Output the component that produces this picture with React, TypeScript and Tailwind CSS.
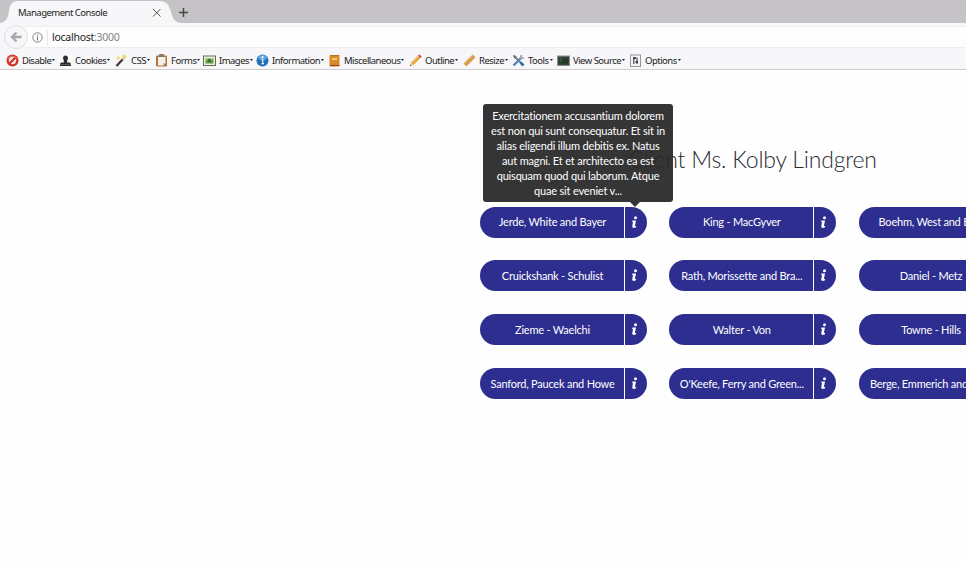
import type { ReactNode } from "react";

const tools: { label: string; cell: string; icon: ReactNode }[] = [
  {
    label: "Disable", cell: "w-[53px]",
    icon: (<><circle cx="6.5" cy="6.5" r="6" fill="#cf3426" /><circle cx="6.5" cy="6.5" r="3.7" fill="#f6e2de" /><path d="M3.5 9.5l6-6" stroke="#cf3426" strokeWidth="2.2" /><path d="M2 4.5Q6.500-.5 11 4.500" stroke="#ef8a78" strokeWidth=".8" fill="none" /></>),
  },
  {
    label: "Cookies", cell: "w-[56px]",
    icon: (<><path d="M4 3.500a2.600 2.800 0 0 1 5 0c0 1.800-1 2.500-1 5h2.500q1.500.2 1.500 3.500H1Q1 8.700 2.500 8.500H5C5 6 4 5.300 4 3.500z" fill="#292b31" /><path d="M1 10.500h11" stroke="#6a6d73" strokeWidth=".7" /></>),
  },
  {
    label: "CSS", cell: "w-[40px]",
    icon: (<><path d="M1.500 12L8.500 4.500" stroke="#34302a" strokeWidth="2" /><path d="M7.500 5.500l2.500-2.500" stroke="#ddd3a0" strokeWidth="2" /><path d="M3 1l1 2 2 .5-2 1-1 2-1-2-1-.7 1.700-.7zM10 0l.6 1.500L12 2l-1.300 1 .3 2-1.500-1-2 .5.500-2L7 1.500l2-.2z" fill="#efd24d" opacity=".85" /></>),
  },
  {
    label: "Forms", cell: "w-[48px]",
    icon: (<><rect x="1" y="1.500" width="11" height="11" rx="1" fill="#b5713a" /><path d="M3 3h7.500v6L8 11.500H3z" fill="#f2f0ed" /><path d="M8 11.500V9h2.500z" fill="#c9c2ba" /><rect x="4" y="0" width="5" height="3" rx="1" fill="#8b7660" /></>),
  },
  {
    label: "Images", cell: "w-[53px]",
    icon: (<><rect x=".5" y="2" width="12" height="9.500" fill="#eef1e6" stroke="#5e7050" /><rect x="2.500" y="4" width="8" height="5.500" fill="#5e9a42" /><path d="M2.500 7l2-1.500L7 7l3.500-1.500v-1.500h-8z" fill="#a9ca78" /><rect x="5" y="5" width="3" height="3" fill="#416f39" /></>),
  },
  {
    label: "Information", cell: "w-[72px]",
    icon: (<><circle cx="6.500" cy="6.500" r="6" fill="#1f72b8" /><ellipse cx="6.500" cy="3.500" rx="4.500" ry="2.500" fill="#5ca6dd" /><circle cx="6.500" cy="3.200" r="1.100" fill="#fff" /><path d="M5.500 5.700h1.300v4M5.300 9.700h2.700" stroke="#fff" strokeWidth="1.100" fill="none" /></>),
  },
  {
    label: "Miscellaneous", cell: "w-[81px]",
    icon: (<><rect x="1.500" y="1" width="10" height="11.500" rx="1" fill="#d98a26" /><path d="M2 11.500h9.500" stroke="#844b17" /><path d="M4 4h5v2H4z" fill="#f6c476" /><path d="M2 1.500h9" stroke="#b56c21" strokeWidth=".8" /></>),
  },
  {
    label: "Outline", cell: "w-[54px]",
    icon: (<><path d="M1 12l1-3.500L10 .8 12.300 3 4.500 11z" fill="#e3a13c" /><path d="M9 1.700L10.400.4l2.300 2.200-1.400 1.500z" fill="#d34b48" /><path d="M1 12l1-3.500L4.500 11z" fill="#ead7b6" /><path d="M1 12l.5-1.500 1 1z" fill="#222" /><path d="M3 9l7-7" stroke="#f9d27f" strokeWidth=".8" /></>),
  },
  {
    label: "Resize", cell: "w-[49px]",
    icon: (<><path d="M.5 9.500L9.700.5 12.500 3.200 3.500 12.500z" fill="#dca04d" /><path d="M3 9l1 1M5 7l1 1M7 5l1 1M9 3l1 1" stroke="#c08640" strokeWidth=".7" /><path d="M.8 9.500l9-8.600" stroke="#f4ca85" strokeWidth=".8" /></>),
  },
  {
    label: "Tools", cell: "w-[45px]",
    icon: (<><path d="M2 2l8.500 8.500" stroke="#777e86" strokeWidth="1.800" /><path d="M9.500 1L8.500 3.500l1 1L12 3.800" fill="none" stroke="#929ca6" strokeWidth="1.500" /><path d="M8.500 4.500L1.500 11.500" stroke="#4f80bd" strokeWidth="2.300" /><path d="M8.500 8.500l3 3" stroke="#2f69b1" strokeWidth="2.500" /><path d="M1 1l3 1 .5 2-2 .5z" fill="#616971" /></>),
  },
  {
    label: "View Source", cell: "w-[72px]",
    icon: (<><rect x=".5" y="2" width="12" height="9.500" fill="#46504b" stroke="#888e89" /><rect x="1.500" y="3.500" width="10" height="7" fill="#263b2c" /><path d="M2.500 5h3M2.500 7h2" stroke="#5d7b5f" strokeWidth=".8" /></>),
  },
  {
    label: "Options", cell: "w-[55px]",
    icon: (<><rect x="1.500" y="1" width="10" height="11.500" fill="#f5f5f6" stroke="#93969c" /><path d="M4.800 3.500v6.500M8 3.500v6.500" stroke="#535962" strokeWidth="1.300" /><path d="M4 4h3M6.500 8h2.500" stroke="#22262d" strokeWidth="1.600" /></>),
  },
];

const clients = [
  "Jerde, White and Bayer", "King - MacGyver", "Boehm, West and Batz",
  "Cruickshank - Schulist", "Rath, Morissette and Bra...", "Daniel - Metz",
  "Zieme - Waelchi", "Walter - Von", "Towne - Hills",
  "Sanford, Paucek and Howe", "O'Keefe, Ferry and Green...", "Berge, Emmerich and Koss",
];

function BrowserChrome() {
  return (
    <header className="bg-[#f7f6f8] font-['Noto_Sans','Open_Sans',sans-serif] text-[#222]">
      <div className="relative flex h-[23px] bg-[#c5c3c6]">
        <svg className="absolute left-0 top-0" width="182" height="23" viewBox="0 0 182 23">
          <path d="M0 23C7 22 8 17 9 11C10 4 12 1 18 1H159C168 1 169 6 171 12C173 19 175 23 182 23z" fill="#f7f6f8" />
        </svg>
        <div className="relative flex h-full w-[174px] items-center pl-[18px] pt-[1px]">
          <span className="w-[133px] whitespace-nowrap text-[9.5px] leading-[13px] tracking-[-0.5px]">Management Console</span>
          <svg width="11" height="11" viewBox="0 0 11 11" stroke="#555" fill="none"><path d="M2 2l7.500 7.500M9.500 2L2 9.500" /></svg>
        </div>
        <svg className="relative mt-[7px] ml-[4px]" width="11" height="11" viewBox="0 0 11 11"><path d="M5.500 1v9M1 5.500h9" stroke="#444" strokeWidth="1.500" /></svg>
      </div>
      <div className="flex h-[28px] items-center pl-[4px]">
        <div className="z-10 flex size-[24px] shrink-0 items-center justify-center rounded-full border border-[#dfdde0] bg-[#f7f6f8]">
          <svg width="12" height="12" viewBox="0 0 12 12" fill="none" stroke="#a9a7ab" strokeWidth="2.300"><path d="M11.500 6H2M6.500 1.500L2 6l4.500 4.500" /></svg>
        </div>
        <div className="-ml-[3px] flex h-[22px] flex-1 items-center border-y border-[#eeecef] bg-[#fdfdfe] pl-[7px]">
          <svg width="11" height="11" viewBox="0 0 11 11" fill="none" stroke="#77757a"><circle cx="5.500" cy="5.500" r="4.700" strokeWidth=".9" /><path d="M5.500 2.500v1.200M5.500 4.600v3.800" strokeWidth="1.100" /></svg>
          <span className="ml-[4px] h-[15px] w-px bg-[#e8e6e9]" />
          <span className="ml-[4px] pt-[2px] text-[10.5px] tracking-[-0.26px]">localhost<span className="text-[#858387]">:3000</span></span>
        </div>
      </div>
      <nav className="flex h-[19px] items-center border-b border-[#cfcdd0] pl-[6px]">
        {tools.map((tool) => (
          <div key={tool.label} className={`flex shrink-0 items-center ${tool.cell}`}>
            <svg className="mr-[3px] shrink-0" width="13" height="13" viewBox="0 0 13 13">{tool.icon}</svg>
            <span className="whitespace-nowrap text-[9.5px] leading-[13px] tracking-[-0.52px]">{tool.label}</span>
            <svg className="ml-px shrink-0" width="3" height="2" viewBox="0 0 3 2"><path d="M0 0h3L1.500 2z" fill="#222" /></svg>
          </div>
        ))}
      </nav>
    </header>
  );
}

function ClientButton({ name, children }: { name: string; children?: ReactNode }) {
  return (
    <div className="relative flex h-[31px] w-[167px] text-[11px] text-white">
      <button className="flex h-full w-[144px] items-center justify-center rounded-l-full bg-[#2d2e8f] pl-px pt-px">
        <span className="whitespace-nowrap tracking-[-0.22px]">{name}</span>
      </button>
      <button className="ml-px flex h-full w-[22px] items-center rounded-r-full bg-[#2d2e8f] pl-[6px]" aria-label="Details">
        <svg width="7" height="13" viewBox="0 0 7 13" fill="white"><circle cx="4.500" cy="1.800" r="1.500" /><path d="M1.500 4.500H5L3.900 10H5.200L5 11.300Q1.500 12.700 1.200 10.800L2 6H1.100z" /></svg>
      </button>
      {children}
    </div>
  );
}

export default function App() {
  return (
    <div className="h-[564px] w-[966px] overflow-hidden bg-[#fefefe]">
      <BrowserChrome />
      <main className="ml-[480px] w-[545px] pt-[70px] font-['Lato',sans-serif]">
        <h1 className="h-[38px] whitespace-nowrap text-center text-[23px] font-light leading-[38px] tracking-[-0.2px] text-[#292b31]">Client Ms. Kolby Lindgren</h1>
        <div className="mt-[28.700px] grid grid-cols-[repeat(3,167px)] gap-x-[22.300px] gap-y-[22.800px]">
          {clients.map((name, i) => (
            <ClientButton key={name} name={name}>
              {i === 0 && (
                <div className="absolute bottom-[36px] left-[3px] h-[98px] w-[190px] whitespace-nowrap rounded-[3px] bg-[#292829]/94 pt-[4px] text-center text-[11px] leading-[15px] tracking-[-0.18px] text-white">
                  Exercitationem accusantium dolorem<br />est non qui sunt consequatur. Et sit in<br />alias eligendi illum debitis ex. Natus<br />aut magni. Et et architecto ea est<br />quisquam quod qui laborum. Atque<br />quae sit eveniet v...
                  <svg className="absolute left-[147px] top-full" width="10" height="5" viewBox="0 0 10 5"><path d="M0 0h10L5 5z" fill="#343334" /></svg>
                </div>
              )}
            </ClientButton>
          ))}
        </div>
      </main>
    </div>
  );
}
